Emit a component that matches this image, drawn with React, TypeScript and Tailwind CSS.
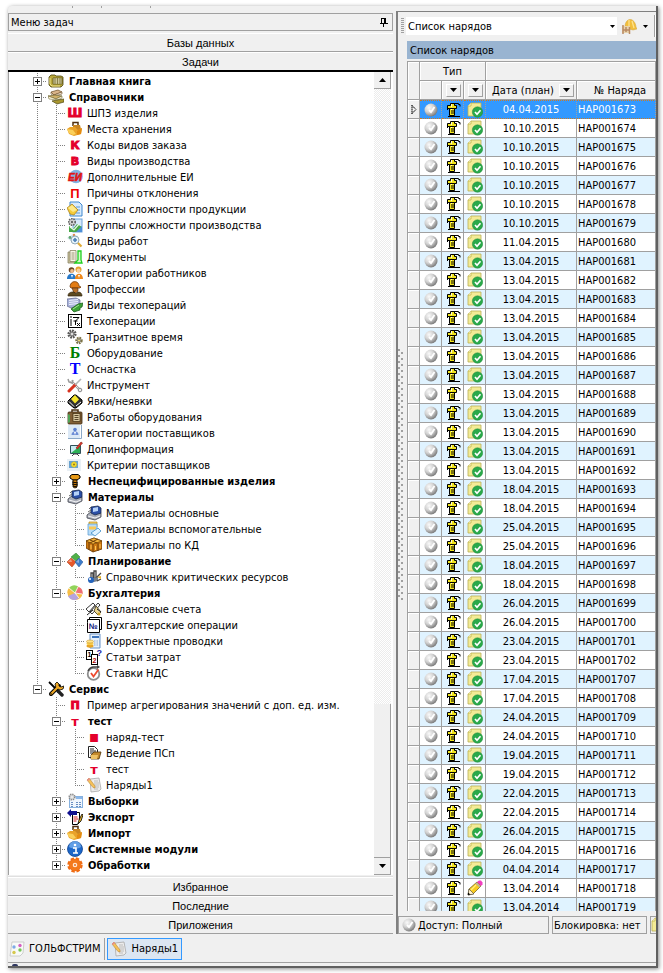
import { Fragment, useState, type ReactNode } from "react";

const glyphs: Record<string, ReactNode> = {
  ledger: (
    <>
      <path d="M1 4l2-2h4l1 1h5l2 1v8l-2 2H3l-2-2z" fill="#b9a83c" stroke="#4a430c" strokeWidth="0.8" />
      <path d="M5 5h9v6H5z" fill="#fffad2" stroke="#4a430c" strokeWidth="0.7" />
      <path d="M5 7h9M5 9h9M7 5v6M9.500 5v6M12 5v6" stroke="#5b5212" strokeWidth="0.6" />
      <path d="M2 5v6l2 2h8" fill="none" stroke="#f0e48c" />
    </>
  ),
  books: (
    <>
      <path d="M3 3l7-2 4 2-8 3z" fill="#d9b48a" stroke="#6b4b23" strokeWidth="0.7" />
      <path d="M3 3v2l3 2 8-2V3L6 6z" fill="#f6ead8" stroke="#6b4b23" strokeWidth="0.6" />
      <path d="M0 7l7-1 7 1-6 3z" fill="#cfb06a" stroke="#5e5620" strokeWidth="0.6" />
      <path d="M0 7l1 3 8 1 5-2V7l-6 3z" fill="#fff8dc" stroke="#5e5620" strokeWidth="0.5" />
      <path d="M4 12l5-1 7-1v3l-7 2z" fill="#a8962f" stroke="#4e4718" strokeWidth="0.7" />
    </>
  ),
  bagBrown: (
    <>
      <path d="M6 5V1.500h5V5" fill="none" stroke="#503010" strokeWidth="1.5" />
      <path d="M6 4h7l1 4-3 3-5-2z" fill="#c98522" />
      <path d="M0 8l3-2h5l3 3 4-2-1 6-7 2-5-2z" fill="#e9a229" />
      <path d="M0 8l6 1 3 4-3 1-4-2z" fill="#fbd05a" />
      <path d="M10 10l5-3-1 6-4 1z" fill="#e48b10" />
    </>
  ),
  unit: (
    <>
      <circle cx="9" cy="7.500" r="6.800" fill="#7fb4e4" />
      <text x="1" y="12" fontSize="10" fontWeight="700" fontStyle="italic" fill="#e11515" stroke="#e11515" strokeWidth="0.6" fontFamily="Liberation Sans">ЕИ</text>
    </>
  ),
  goldDoc: (
    <>
      <path d="M3 1h9l3 3v11H3z" fill="#d8eafc" stroke="#3f88cf" />
      <path d="M9 6h4M9 9h4M9 12h4" stroke="#5a9ad6" />
      <path d="M0 7l5-4 6 6-4 5-4-1z" fill="#f4cb3a" stroke="#a57a12" strokeWidth="0.7" />
      <path d="M1 7l4-3 5 5-4 2z" fill="#fde98d" />
    </>
  ),
  gearChart: (
    <>
      <rect x="6" y="2" width="9" height="13" fill="#d6e8fa" stroke="#6ea3da" />
      <path d="M2 15V9l4 3 4-5 5 3v5z" fill="#46a845" />
      <path d="M3 10l4 3 5-6" fill="none" stroke="#e7f6e5" strokeWidth="1.2" />
      <path d="M9 15l6-6v6z" fill="#4e8fd8" />
      <circle cx="5" cy="5" r="3.200" fill="#ddd" stroke="#666" strokeWidth="1.7" strokeDasharray="1.5 .8" />
      <circle cx="5" cy="5" r="1.200" fill="#666" />
    </>
  ),
  magnify: (
    <>
      <path d="M0 5l6-4 5 2-6 6z" fill="#d5e6ee" />
      <circle cx="3" cy="4.500" r="1.400" fill="#62a66c" />
      <circle cx="7" cy="2" r="1.200" fill="#dd8a52" />
      <circle cx="8" cy="7" r="4" fill="#e4f2fb" stroke="#94abb8" />
      <path d="M6 7h4M8 5v4" stroke="#4b7fb5" strokeWidth="1.6" />
      <path d="M11 10l3.500 3.500" stroke="#e0ab38" strokeWidth="2.2" />
    </>
  ),
  docGreen: (
    <>
      <path d="M1 3h7v11H1z" fill="#c9c29c" stroke="#8a8465" strokeWidth="0.8" />
      <path d="M3 1.500h6v11H3z" fill="#f9f6e6" stroke="#8a8465" strokeWidth="0.8" />
      <path d="M4.500 4h3M4.500 6h3M4.500 8h3M4.500 10h3" stroke="#9c9676" />
      <path d="M11 2h3v9l1 3H8l3-3z" fill="#d6f9ca" stroke="#1fcf1f" strokeWidth="1.3" />
    </>
  ),
  people: (
    <>
      <circle cx="4.500" cy="5" r="2.800" fill="#6c4524" />
      <circle cx="5" cy="6" r="1.900" fill="#f0bd8c" />
      <path d="M0 14c0-7 9-7 9 0z" fill="#2878c8" />
      <circle cx="11.500" cy="4.500" r="3" fill="#e5a12f" />
      <circle cx="11.500" cy="5.500" r="1.900" fill="#f9cfa0" />
      <path d="M8 14c0-7 8-7 8 0z" fill="#ef8a1d" />
      <path d="M4 10l1 3 1-3M11 10l1 3 1-3" fill="#fff" />
    </>
  ),
  worker: (
    <>
      <path d="M3 6c0-7 9-7 9-1l2 1-1 1H4z" fill="#e27b12" stroke="#5e2f08" strokeWidth="0.7" />
      <path d="M5 7h6v3l-2 2H7z" fill="#b8712b" stroke="#4b270b" strokeWidth="0.6" />
      <path d="M1 15c0-4 4-4 6-4l2 2 2-2c3 0 4 2 4 4z" fill="#5d4a20" stroke="#30240c" strokeWidth="0.7" />
    </>
  ),
  techKind: (
    <>
      <path d="M0 2l9-1 4 2v6l-9 2-4-2z" fill="#a8b2d8" stroke="#5b6288" strokeWidth="0.7" />
      <path d="M2 3.500l9-1M2 5.500l9-1M2 7.500l9-1" stroke="#eef1ff" />
      <path d="M4 12l7-5 5-1-1 4-2 1v2l-6 2z" fill="#3ba136" stroke="#145813" strokeWidth="0.7" />
      <path d="M6 12l6-4" stroke="#a2e48f" />
    </>
  ),
  techOp: (
    <>
      <rect x="1.500" y="1.500" width="13" height="13" fill="#fff" stroke="#000" />
      <path d="M4 3v2M4 6v5M6 4.500h6L8.500 8M6.500 8h4M8.500 8v4M10 10l3 3M13 10l-3 3" stroke="#000" fill="none" />
      <path d="M3 12h2" stroke="#000" />
    </>
  ),
  gears: (
    <>
      <circle cx="5" cy="5" r="3" fill="none" stroke="#5a5a5a" strokeWidth="3.200" strokeDasharray="1.600 .7" />
      <circle cx="5" cy="5" r="2" fill="#ddd" stroke="#666" />
      <circle cx="12" cy="11.500" r="2.400" fill="none" stroke="#7c7243" strokeWidth="2.600" strokeDasharray="1.400 .7" />
      <circle cx="12" cy="11.500" r="1.600" fill="#eed96d" stroke="#777" />
    </>
  ),
  tools: (
    <>
      <path d="M4 4l8 8" stroke="#999" strokeWidth="2.400" />
      <path d="M4 4l8 8" stroke="#e4e4e4" />
      <path d="M1 2l1 3 3 1 1-3" fill="none" stroke="#999" strokeWidth="1.5" />
      <path d="M2 14l6-6" stroke="#d8321f" strokeWidth="3" strokeLinecap="round" />
      <path d="M8 8l6-6" stroke="#b3b3b3" strokeWidth="1.600" />
      <circle cx="13" cy="13" r="1.800" fill="#eee" stroke="#888" />
    </>
  ),
  diamond: (
    <>
      <path d="M1 8l6-6h2l6 5v3l-6 5H7L1 10z" fill="#303030" stroke="#000" />
      <path d="M4 6l4-4 4 4.500-4 4z" fill="#f7e72b" />
      <path d="M2 8.500l5 5M9 13l5-4" stroke="#fff" />
    </>
  ),
  briefcase: (
    <>
      <path d="M5 4V1h6v3" fill="none" stroke="#4c3216" strokeWidth="1.500" />
      <rect x="1" y="3" width="14" height="12" rx="1" fill="#805e35" stroke="#3d280f" strokeWidth="0.8" />
      <rect x="6" y="4.500" width="7" height="8" fill="#d8c79f" stroke="#3d280f" strokeWidth="0.700" />
      <path d="M7.500 6.500h4M7.500 8.500h4M7.500 10.500h4" stroke="#57452a" />
      <path d="M1 5l2 1v7l-2 1z" fill="#4fa354" />
    </>
  ),
  supplier: (
    <>
      <path d="M1 0h12v13H1z" fill="#dce9f6" />
      <path d="M14.500 0v13.500H1" stroke="#8ca9c8" fill="none" />
      <circle cx="8" cy="4.500" r="1.800" fill="#5b7ed0" />
      <path d="M4.500 10c0-5 7-5 7 0z" fill="#6f8fd6" />
      <path d="M7 7l1 3 1-3" fill="#fff" />
    </>
  ),
  info: (
    <>
      <path d="M3.500 4.500h10v8h-10z" fill="#c8ecf2" stroke="#30505a" />
      <path d="M4 12l9-7v7z" fill="#2eb157" />
      <path d="M9 7l5-6 1.500 1-5 6z" fill="#e33b2c" stroke="#7c150e" strokeWidth="0.600" />
      <path d="M5 15l2-2h3l2 2" fill="none" stroke="#444" />
    </>
  ),
  criteria: (
    <>
      <path d="M0 2h14v12H0z" fill="#e9f0f5" />
      <rect x="2" y="4" width="9" height="7" fill="#6ba3cf" />
      <circle cx="7" cy="7.500" r="2.700" fill="#f6dd2c" stroke="#d2b21c" strokeDasharray="1 1" />
      <circle cx="7" cy="7.500" r=".9" fill="#8a721b" />
    </>
  ),
  bolt: (
    <>
      <path d="M3 3l2-1.500h6L13 3v2l-3 2H6L3 5z" fill="#e79a18" stroke="#000" />
      <path d="M6 7h4v7l-2 1-2-1z" fill="#d4820c" stroke="#000" strokeWidth="0.8" />
      <path d="M5 9l6 1M5 11l6 1M6 13l4 1" stroke="#000" />
    </>
  ),
  press: (
    <>
      <path d="M1 10l5-4 9 2v4l-6 3-8-2z" fill="#a9adb8" stroke="#3f434d" strokeWidth="0.800" />
      <path d="M5 2l7-1 3 2v5l-6 2-4-2z" fill="#2b4fa6" stroke="#19294e" strokeWidth="0.800" />
      <path d="M7 3l5-1v4L7 7z" fill="#b6d2f8" />
      <path d="M2 11l7 2 5-2" fill="none" stroke="#f5f5f5" />
      <path d="M3 4l2-2M2 7l3-2" stroke="#666" />
    </>
  ),
  vial: (
    <>
      <path d="M3 1h8v5H3z" fill="#ffd45a" stroke="#b58517" strokeWidth="0.700" />
      <path d="M2 3h9v9l-3 2H2z" fill="#b8dcf8" stroke="#559ad0" strokeWidth="0.700" />
      <path d="M3 7h7" stroke="#f9c956" strokeWidth="3" />
      <path d="M5 12l7-5 3 3-6 5z" fill="#dff2ff" stroke="#3e8dc7" strokeWidth="0.800" />
    </>
  ),
  crate: (
    <>
      <path d="M0 4l8-3 8 3v8l-9 3-7-4z" fill="#cf7a12" stroke="#5e3404" strokeWidth="0.800" />
      <path d="M0 4l7 3 9-3-8-3z" fill="#f5b63c" stroke="#5e3404" strokeWidth="0.600" />
      <path d="M7 7v8M3 5v8M12 6v8M4 3l7 3M12 2L4 6" stroke="#6e3d07" />
      <path d="M5 8v4M9.500 9v4M14 7v4" stroke="#ffc757" />
    </>
  ),
  cubes: (
    <>
      <path d="M4 4l5-4 4 4-4 4z" fill="#50b149" stroke="#277a28" strokeWidth="0.500" />
      <path d="M0 9l4-4 5 4-4 5z" fill="#e8592b" stroke="#a63412" strokeWidth="0.500" />
      <path d="M8 9l4-4 4 4-4 5z" fill="#3d7dcb" stroke="#214f93" strokeWidth="0.500" />
      <path d="M1 9l3-3 1 3zM9 9l3-3v4z" fill="#fff" opacity=".4" />
    </>
  ),
  resource: (
    <>
      <path d="M2 10l10-2v4l-8 2z" fill="#77808a" />
      <path d="M5 9V4h2v5M8 9V2h2v7M11 8l4-4M11 12l4-2" fill="none" stroke="#444" strokeWidth="1.300" />
      <circle cx="5" cy="11" r="3" fill="#2464bd" />
      <circle cx="4" cy="10" r="1" fill="#fff" />
      <path d="M11 8l4-1v3z" fill="#e8b52f" />
    </>
  ),
  pie: (
    <>
      <ellipse cx="8" cy="8" rx="7.500" ry="7" fill="#f7be45" />
      <path d="M8 8L2 3c3-4 8-3 9-1z" fill="#91d45b" />
      <path d="M8 8l3-6c4 1 5 4 4.500 7z" fill="#ee6d76" />
      <path d="M8 8L1 11c2 5 8 5 11 2z" fill="#b6a4de" />
      <path d="M8 8L.5 8c-.5-3 1-4 1.500-5z" fill="#f7be45" />
      <path d="M8 8L2 3M8 8l3-6M8 8l7 1M8 8l4 5" stroke="#fff" strokeWidth="0.800" />
    </>
  ),
  handshake: (
    <>
      <path d="M0 8l7-6 2 2-6 7zM4 11l8-9 2 2-8 9z" fill="#fff" stroke="#222" strokeWidth="0.9" />
      <path d="M10 5l5 6-3 3-4-4z" fill="#ead694" stroke="#332b0d" strokeWidth="0.800" />
      <path d="M1 14l6-5M11 8l4 3" stroke="#222" />
      <circle cx="13" cy="13" r="1.500" fill="#c69b22" />
    </>
  ),
  number: (
    <>
      <path d="M3.500 3.500v-3h12v12h-3" fill="#fff" stroke="#000" />
      <path d="M1.500 5.500v-3h12v13h-12z" fill="#fff" stroke="#000" />
      <text x="2.500" y="12" fontSize="8" fontWeight="700" fill="#102080" fontFamily="Liberation Sans">№</text>
    </>
  ),
  calcDoc: (
    <>
      <path d="M4 1h10v14H4z" fill="#e6f0fb" stroke="#6a94c9" />
      <path d="M6 3h7v2H6z" fill="#3d75bf" />
      <path d="M8 8h6M8 10h6M8 12h6" stroke="#88a9d2" strokeDasharray="1.500 1" />
      <ellipse cx="4" cy="13" rx="3.500" ry="1.700" fill="#e7a424" />
      <ellipse cx="4" cy="10.500" rx="3.500" ry="1.700" fill="#f8cc4c" />
      <ellipse cx="4" cy="8.500" rx="3.500" ry="1.500" fill="#ffe48a" stroke="#c18a1b" strokeWidth="0.500" />
    </>
  ),
  costs: (
    <>
      <rect x=".5" y="1.500" width="6" height="9" fill="#fff" stroke="#000" />
      <rect x="5.500" y="5.500" width="6" height="10" fill="#fff" stroke="#000" />
      <text x="1.500" y="8" fontSize="7" fontWeight="700" fontFamily="Liberation Sans">1</text>
      <text x="6.500" y="13.500" fontSize="7" fontWeight="700" fill="#b00000" fontFamily="Liberation Sans">2</text>
      <text x="10.500" y="7" fontSize="9" fontWeight="700" fill="#1c1ca8" fontFamily="Liberation Sans">?</text>
    </>
  ),
  rate: (
    <>
      <circle cx="7.500" cy="9" r="5.800" fill="#fff" stroke="#8e8e8e" strokeWidth="1.800" />
      <path d="M2 6a7 7 0 0 1 5-4l5 0" fill="none" stroke="#444" strokeWidth="1.400" />
      <path d="M11 0l3 2-3 2z" fill="#444" />
      <path d="M5 8l2.500 3.500 5-7" fill="none" stroke="#ee4a2f" strokeWidth="1.800" />
    </>
  ),
  service: (
    <>
      <path d="M1 1l10 10" stroke="#000" strokeWidth="1.800" />
      <path d="M10 10l4 4" stroke="#222" strokeWidth="3.400" strokeLinecap="round" />
      <path d="M3 13l8-8" stroke="#000" strokeWidth="4" strokeLinecap="round" />
      <path d="M9 1l2 2 0 2 2 1 3-1-1 3-3 1-4-2-1-4z" fill="#eda826" stroke="#000" strokeWidth="0.800" />
      <path d="M3 13l7-7" stroke="#eda826" strokeWidth="2.200" strokeLinecap="round" />
      <circle cx="3" cy="13" r=".8" fill="#000" />
    </>
  ),
  docBox: (
    <>
      <path d="M2.500 1.500h6l3 3v8h-9z" fill="#fff" stroke="#222" />
      <path d="M4 4h4M4 6h6M4 8h4" stroke="#222" />
      <path d="M5 10l3-3h7l-2 7H5z" fill="#c48a2c" stroke="#4f3307" strokeWidth="0.800" />
      <path d="M5 10h7l-1 4H5z" fill="#eec265" />
    </>
  ),
  note: (
    <>
      <path d="M4 2l9-1 2 11-2 2-8 1z" fill="#ececec" stroke="#a8a8a8" strokeWidth="0.800" />
      <path d="M8 4h4M8 6h5M7 8h6M8 10h5M8 12h4" stroke="#bcbcbc" />
      <path d="M1 3l2-2 6 8v2l-2-.5z" fill="#f6c25a" stroke="#b98a3c" strokeWidth="0.600" />
      <path d="M1 3l2-2 1 1-2 2z" fill="#e98792" />
    </>
  ),
  selection: (
    <>
      <rect x="2.500" y="3.500" width="13" height="11" fill="#f0f6fd" stroke="#87b1df" />
      <path d="M9 4h6v2H9z" fill="#8bb8ea" />
      <path d="M4 9.500h3M9 9.500h5M4 11.500h3M9 11.500h5M4 13.500h3M9 13.500h5" stroke="#4674b2" strokeDasharray="2 1" strokeWidth="0.8" />
      <circle cx="5" cy="4" r="2.700" fill="#e9e9e9" stroke="#8a8a8a" strokeWidth="1.800" strokeDasharray="1.300 .8" />
    </>
  ),
  exportIcon: (
    <>
      <path d="M5.500 3.500h7v9l-2 3h-5z" fill="#fff" stroke="#000" />
      <path d="M6.500 8h4M6.500 10h5M6.500 12h3" stroke="#d1212b" />
      <path d="M0 4l4-4v2h6v4H4v2z" fill="#10108f" />
      <path d="M15 5l-3 6-1 4 3-3 2-6z" fill="#e8b326" stroke="#000" strokeWidth="0.800" />
    </>
  ),
  system: (
    <>
      <circle cx="8" cy="8" r="7.500" fill="#1c66c8" stroke="#0f4490" strokeWidth="0.800" />
      <path d="M2 6a6 6 0 0 1 12 0c-3 2-8 2-12 0z" fill="#78b2f0" opacity=".75" />
      <circle cx="8" cy="4" r="1.300" fill="#fff" />
      <path d="M6 7h3v5h1M6 12h5" fill="none" stroke="#fff" strokeWidth="1.600" />
    </>
  ),
  process: (
    <>
      <circle cx="8" cy="8" r="6.200" fill="#ef6b13" stroke="#ef6b13" strokeWidth="3" strokeDasharray="3.200 1.670" />
      <circle cx="8" cy="8" r="5.800" fill="#f47a1c" />
      <circle cx="8" cy="8" r="2.300" fill="#ffe9d3" />
      <circle cx="8" cy="8" r="1" fill="#ef6b13" />
    </>
  ),
  home: (
    <>
      <path d="M3 1h12l-1 11-3 3H1z" fill="#f8faf8" stroke="#c2c4c2" strokeWidth="0.800" />
      <circle cx="5" cy="6" r="1.700" fill="#7eaae6" />
      <circle cx="11" cy="4.500" r="1.700" fill="#d65fc2" />
      <circle cx="11" cy="9" r="1.700" fill="#76c657" />
      <circle cx="5" cy="11.500" r="1.700" fill="#d6c84d" />
    </>
  ),
  sphere: (
    <>
      <defs>
        <radialGradient id="ball" cx="35%" cy="32%" r="70%">
          <stop offset="0" stopColor="#fafafa" />
          <stop offset=".5" stopColor="#d2d2d2" />
          <stop offset="1" stopColor="#7c7c7c" />
        </radialGradient>
      </defs>
      <circle cx="8" cy="8" r="6.500" fill="url(#ball)" />
      <path d="M6 8l2 2 3.500-5" fill="none" stroke="#fff" strokeWidth="1.800" />
    </>
  ),
  robot: (
    <>
      <path d="M5.500 1.500h4v2h2v3h-9v-3h3z" fill="#f2e51e" stroke="#000" />
      <path d="M4.500 6.500h5v7h-5z" fill="#f2e51e" stroke="#000" />
      <path d="M6 9h4M6 11h4M3 14.500h12" stroke="#000" />
      <path d="M9 1.500h4.500v1h1.500v2M2.500 4v4" fill="none" stroke="#000" />
      <path d="M6.500 2v3M6 7.500h1" stroke="#fffbd0" />
    </>
  ),
  approved: (
    <>
      <path d="M4 1h10v12l-1 1H1V4z" fill="#f3eb96" stroke="#b9ae55" strokeWidth="0.8" />
      <path d="M1 4h3V1" fill="#fffbd8" stroke="#c2b64c" strokeWidth="0.8" />
      <circle cx="10.500" cy="10" r="5.200" fill="#2aa94a" stroke="#1d8a39" strokeWidth="0.500" />
      <path d="M8 10l2 2.200 3.500-4" fill="none" stroke="#fff" strokeWidth="1.700" />
    </>
  ),
  pencil: (
    <>
      <path d="M1 15l1-6 8-7 4 4-8 8z" fill="#f8cc21" stroke="#4b3b05" strokeWidth="0.600" />
      <path d="M1 15l1-6 5 5z" fill="#fff1d1" stroke="#222" strokeWidth="0.500" />
      <path d="M1 15v-2.500l2.500 2z" fill="#000" />
      <path d="M10 2l2-1.500h2l1.500 2v2L14 6z" fill="#f23fc2" />
      <path d="M9 3l4 4" stroke="#b0b0b0" strokeWidth="1.500" />
      <path d="M4 10l5-5" stroke="#fff07d" strokeWidth="1.2" />
    </>
  ),
  helmet: (
    <>
      <path d="M4 9c0-10 10-10 11 0l1 2-4 1-8-2z" fill="#f1be3c" stroke="#d1a23a" strokeWidth="0.500" />
      <path d="M8 2v6M11 3l2 7" stroke="#fde18b" strokeWidth="1.300" />
      <path d="M1 8h8v7H1z" fill="#e8d3ac" />
      <path d="M2 7v9M5 9v5M8.500 9v7M2 12h6" stroke="#b98a63" strokeWidth="1.500" />
    </>
  ),
};

function Icon({ name }: { name: string }) {
  return (
    <svg viewBox="0 0 16 16" className="size-4 shrink-0" fill="#000" aria-hidden="true">
      {glyphs[name]}
    </svg>
  );
}

const letters: Record<string, [string, string]> = {
  sh: ["Ш", "text-[#e4002b] text-xs font-['DejaVu_Sans'] [-webkit-text-stroke:1px_#e4002b]"],
  k: ["К", "text-[#e4002b] text-[11px] font-['DejaVu_Sans'] [-webkit-text-stroke:1px_#e4002b]"],
  v: ["В", "text-[#e4002b] text-[11px] font-['DejaVu_Sans'] [-webkit-text-stroke:1px_#e4002b]"],
  p: ["П", "text-[#ee0000] text-[13px] font-['Liberation_Sans']"],
  p2: ["П", "text-[#e4002b] text-[11px] font-['DejaVu_Sans'] [-webkit-text-stroke:1px_#e4002b]"],
  b: ["Б", "text-[#008000] text-base font-['Liberation_Serif']"],
  t: ["Т", "text-[#0000ff] text-base font-['Liberation_Serif']"],
  tr: ["т", "text-[#e4002b] text-[13px] font-['DejaVu_Sans']"],
  n: ["н", "text-[#e4002b] text-[11px] font-['DejaVu_Sans'] [-webkit-text-stroke:2px_#e4002b]"],
};

function RowIcon({ name }: { name: string }) {
  const letter = letters[name];
  if (!letter) return <Icon name={name} />;
  return (
    <span aria-hidden="true" className={`flex size-4 shrink-0 items-center justify-center font-bold leading-none ${letter[1]}`}>
      {letter[0]}
    </span>
  );
}

type Node = { label: string; icon: string; open?: boolean; children?: Node[]; group?: boolean };
const leaf = (label: string, icon: string): Node => ({ label, icon });
const folder = (label: string, icon: string, children: Node[] = []): Node => ({
  label, icon, children, group: true, open: children.length > 0,
});

const tree: Node[] = [
  folder("Главная книга", "ledger"),
  folder("Справочники", "books", [
    leaf("ШПЗ изделия", "sh"),
    leaf("Места хранения", "bagBrown"),
    leaf("Коды видов заказа", "k"),
    leaf("Виды производства", "v"),
    leaf("Дополнительные ЕИ", "unit"),
    leaf("Причины отклонения", "p"),
    leaf("Группы сложности продукции", "goldDoc"),
    leaf("Группы сложности производства", "gearChart"),
    leaf("Виды работ", "magnify"),
    leaf("Документы", "docGreen"),
    leaf("Категории работников", "people"),
    leaf("Профессии", "worker"),
    leaf("Виды техопераций", "techKind"),
    leaf("Техоперации", "techOp"),
    leaf("Транзитное время", "gears"),
    leaf("Оборудование", "b"),
    leaf("Оснастка", "t"),
    leaf("Инструмент", "tools"),
    leaf("Явки/неявки", "diamond"),
    leaf("Работы оборудования", "briefcase"),
    leaf("Категории поставщиков", "supplier"),
    leaf("Допинформация", "info"),
    leaf("Критерии поставщиков", "criteria"),
    folder("Неспецифицированные изделия", "bolt"),
    folder("Материалы", "press", [
      leaf("Материалы основные", "press"),
      leaf("Материалы вспомогательные", "vial"),
      leaf("Материалы по КД", "crate"),
    ]),
    folder("Планирование", "cubes", [leaf("Справочник критических ресурсов", "resource")]),
    folder("Бухгалтерия", "pie", [
      leaf("Балансовые счета", "handshake"),
      leaf("Бухгалтерские операции", "number"),
      leaf("Корректные проводки", "calcDoc"),
      leaf("Статьи затрат", "costs"),
      leaf("Ставки НДС", "rate"),
    ]),
  ]),
  folder("Сервис", "service", [
    leaf("Пример агрегирования значений с доп. ед. изм.", "p2"),
    folder("тест", "tr", [
      leaf("наряд-тест", "n"),
      leaf("Ведение ПСп", "docBox"),
      leaf("тест", "tr"),
      leaf("Наряды1", "note"),
    ]),
    folder("Выборки", "selection"),
    folder("Экспорт", "exportIcon"),
    folder("Импорт", "bagBrown"),
    folder("Системные модули", "system"),
    folder("Обработки", "process"),
  ]),
];

function Guide({ up = true, down = true, branch = false }: { up?: boolean; down?: boolean; branch?: boolean }) {
  return (
    <svg viewBox="0 0 19 16" className="col-start-1 row-start-1 h-4 w-[19px] shrink-0" fill="none" stroke="#808080" strokeDasharray="1 1" aria-hidden="true">
      {up && <path d="M9.5 0v8" />}
      {down && <path d="M9.5 8v8" />}
      {branch && <path d="M9 8.5h10" />}
    </svg>
  );
}

function TreeRows({ nodes, trail }: { nodes: Node[]; trail: boolean[] }) {
  return (
    <>
      {nodes.map((node, i) => (
        <TreeRow key={i} node={node} trail={trail} last={i === nodes.length - 1} />
      ))}
    </>
  );
}

function TreeRow({ node, trail, last }: { node: Node; trail: boolean[]; last: boolean }) {
  const [open, setOpen] = useState(!!node.open);
  return (
    <Fragment>
      <li className="flex h-4 items-center whitespace-nowrap">
        {trail.map((line, i) => (
          <Guide key={i} up={line} down={line} />
        ))}
        <span className="grid shrink-0">
          <Guide down={!last} branch />
          {node.group && (
            <button
              type="button"
              aria-label={open ? "Свернуть" : "Развернуть"}
              onClick={() => setOpen(!open)}
              className="col-start-1 row-start-1 ml-[5px] mt-1 size-[9px] bg-white"
            >
              <svg viewBox="0 0 9 9" className="size-[9px]" fill="none" shapeRendering="crispEdges">
                <rect x=".5" y=".5" width="8" height="8" stroke="#808080" />
                <path d={open ? "M2 4.5h5" : "M2 4.5h5M4.5 2v5"} stroke="#000" />
              </svg>
            </button>
          )}
        </span>
        <span className="ml-px flex items-center gap-1">
          <RowIcon name={node.icon} />
          <span className={node.group ? "pl-px font-bold" : ""}>{node.label}</span>
        </span>
      </li>
      {open && node.children && <TreeRows nodes={node.children} trail={[...trail, !last]} />}
    </Fragment>
  );
}

const runs: [number, number, string][] = [
  [1673, 1673, "04.04.2015"],
  [1674, 1679, "10.10.2015"],
  [1680, 1680, "11.04.2015"],
  [1681, 1692, "13.04.2015"],
  [1693, 1694, "18.04.2015"],
  [1695, 1696, "25.04.2015"],
  [1697, 1698, "18.04.2015"],
  [1699, 1700, "26.04.2015"],
  [1701, 1702, "23.04.2015"],
  [1707, 1708, "17.04.2015"],
  [1709, 1710, "24.04.2015"],
  [1711, 1712, "19.04.2015"],
  [1713, 1714, "22.04.2015"],
  [1715, 1716, "26.04.2015"],
  [1717, 1717, "04.04.2014"],
  [1718, 1719, "13.04.2014"],
];
const orders = runs.flatMap(([from, to, date]) =>
  Array.from({ length: to - from + 1 }, (_, i) => ({ id: from + i, date })),
);

function Triangle({ up = false }: { up?: boolean }) {
  return (
    <svg viewBox="0 0 7 4" className="h-1 w-[7px] shrink-0" fill="#000" aria-hidden="true">
      <path d={up ? "M0 4L3.5 0 7 4z" : "M0 0h7L3.5 4z"} />
    </svg>
  );
}

function FilterButton() {
  return (
    <button type="button" aria-label="Фильтр" className="flex h-[13px] w-[15px] shrink-0 items-center justify-center border border-l-white border-t-white border-r-[#a0a0a0] border-b-[#a0a0a0] bg-[#f0f0f0]">
      <Triangle />
    </button>
  );
}

function SideButton({ children, active = false }: { children: string; active?: boolean }) {
  return (
    <button
      type="button"
      className={`w-full shrink-0 border-t border-t-white bg-[#f0f0f0] pt-0.5 text-center font-['Liberation_Sans',sans-serif] text-[11px] leading-[15px] ${active ? "h-5 border-b-2 border-b-black" : "h-[19px] border-b border-b-[#a0a0a0]"}`}
    >
      {children}
    </button>
  );
}

function TaskPanel() {
  return (
    <section className="flex min-h-0 w-[385px] shrink-0 flex-col">
      <div className="flex h-[7px] shrink-0 pl-16">
        <span className="ml-0 h-0.5 w-px bg-[#a0a0a0]" />
        <span className="ml-7 h-0.5 w-px bg-[#a0a0a0]" />
        <span className="ml-12 h-0.5 w-px bg-[#a0a0a0]" />
      </div>
      <header className="mb-0.5 flex h-[18px] shrink-0 items-center justify-between border border-[#a0a0a0] pl-0.5 pr-1">
        <h1 className="text-[11px]">Меню задач</h1>
        <button type="button" aria-label="Закрепить">
          <svg viewBox="0 0 8 10" className="h-2.5 w-2" fill="none" stroke="#000" shapeRendering="crispEdges">
            <path d="M1.500 1v5M1 1.500h5M5.500 1v5M4.500 1v5M0 6.500h8M3.500 7v3" />
          </svg>
        </button>
      </header>
      <SideButton>Базы данных</SideButton>
      <SideButton active>Задачи</SideButton>
      <div className="flex min-h-0 flex-1 overflow-hidden border-l border-r border-l-[#a0a0a0] border-r-white bg-white">
        <ul className="min-w-0 flex-1 overflow-hidden pl-[19px] pt-px">
          <TreeRows nodes={tree} trail={[]} />
        </ul>
        <div className="mr-px flex w-[17px] shrink-0 flex-col bg-[repeating-conic-gradient(#ececec_0_25%,#ffffff_0_50%)] bg-[length:2px_2px]">
          <button type="button" aria-label="Вверх" className="flex h-[17px] items-center justify-center border-b border-r border-[#a0a0a0] bg-[#f0f0f0]">
            <Triangle up />
          </button>
          <div className="grow-[614]" />
          <div className="grow-[153] border-b border-r border-[#a0a0a0] bg-[#f0f0f0]" />
          <button type="button" aria-label="Вниз" className="flex h-[17px] items-center justify-center border-b border-r border-[#a0a0a0] bg-[#f0f0f0]">
            <Triangle />
          </button>
        </div>
      </div>
      <div className="h-0.5 shrink-0 border-b border-[#e0e0e0]" />
      <SideButton>Избранное</SideButton>
      <SideButton>Последние</SideButton>
      <SideButton>Приложения</SideButton>
    </section>
  );
}

const headCell = "border-b border-r border-[#a0a0a0] bg-[#f0f0f0] font-normal shadow-[inset_1px_1px_0_#ffffff]";

function OrdersTable() {
  return (
    <table className="w-full table-fixed border-separate border-spacing-0 border-l border-t border-[#a0a0a0]">
      <colgroup>
        <col className="w-3" />
        <col className="w-[22px]" />
        <col className="w-[22px]" />
        <col className="w-[22px]" />
        <col className="w-[91px]" />
        <col />
      </colgroup>
      <thead>
        <tr className="h-[19px]">
          <th rowSpan={2} className={headCell} />
          <th colSpan={3} className={headCell}>Тип</th>
          <th colSpan={2} className={headCell} />
        </tr>
        <tr className="h-[19px]">
          <th className={headCell} />
          <th className={headCell}><div className="flex justify-end pr-0.5"><FilterButton /></div></th>
          <th className={headCell}><div className="flex justify-end pr-0.5"><FilterButton /></div></th>
          <th className={headCell}>
            <div className="flex items-center justify-between pl-1.5 pr-0.5">Дата (план)<FilterButton /></div>
          </th>
          <th className={headCell}><span className="pl-2">№ Наряда</span></th>
        </tr>
      </thead>
      <tbody>
        {orders.map((order, i) => {
          const picked = i === 0;
          const tone = picked ? "bg-[#3399ff] text-white" : i % 2 ? "bg-white" : "bg-[#e0f3ff]";
          const cell = `border-b p-0 ${picked ? "border-b-[#d07a20] border-t border-t-[#d07a20] border-dotted" : "border-b-[#a0a0a0]"} border-r border-r-[#a0a0a0]`;
          return (
            <tr key={order.id} className={`h-[19px] ${tone}`}>
              <td className="border-b border-r border-[#a0a0a0] bg-[#f0f0f0] p-0 shadow-[inset_1px_1px_0_#ffffff]">
                {picked && (
                  <svg viewBox="0 0 6 9" className="mx-auto h-[9px] w-1.5" fill="none" stroke="#000" strokeDasharray="1.500 .5">
                    <path d="M1 0v9M1 0.500l4 4-4 4" />
                  </svg>
                )}
              </td>
              <td className={cell}><div className="flex h-4 justify-center"><Icon name="sphere" /></div></td>
              <td className={cell}><div className="flex h-4 justify-center"><Icon name="robot" /></div></td>
              <td className={cell}><div className="flex h-4 justify-center"><Icon name={order.id === 1718 ? "pencil" : "approved"} /></div></td>
              <td className={`text-center ${cell}`}>{order.date}</td>
              <td className={cell}><span className="pl-px">HAP00{order.id}</span></td>
            </tr>
          );
        })}
      </tbody>
    </table>
  );
}

function Grip() {
  return (
    <svg viewBox="0 0 5 254" className="h-[254px] w-[5px]" fill="#a0a0a0" shapeRendering="crispEdges" aria-hidden="true">
      {Array.from({ length: 42 }, (_, i) => (
        <path key={i} d={`M0 ${i * 6}h2v2h-2zM3 ${i * 6 + 3}h2v2h-2z`} />
      ))}
    </svg>
  );
}

function OrdersPanel() {
  return (
    <section className="mt-[5px] flex min-w-0 flex-1 flex-col border-l-2 border-t border-[#808080]">
      <div className="flex h-7 shrink-0 items-center pl-[3px]">
        <div className="h-4 w-[3px] bg-[repeating-linear-gradient(#a0a0a0_0_1px,#f0f0f0_1px_2px)]" />
        <div className="ml-0.5 grid h-[18px] min-w-0 flex-1 items-center bg-white">
          <select aria-label="Представление" className="col-start-1 row-start-1 h-[18px] w-full appearance-none bg-transparent pl-0.5 text-[11px] outline-none">
            <option>Список нарядов</option>
          </select>
          <span className="pointer-events-none col-start-1 row-start-1 justify-self-end pr-0.5">
            <svg viewBox="0 0 5 3" className="h-[3px] w-[5px]"><path d="M0 0h5L2.500 3z" /></svg>
          </span>
        </div>
        <button type="button" aria-label="Наряд" className="ml-1 flex items-center gap-1.5 pr-1.5">
          <Icon name="helmet" />
          <svg viewBox="0 0 5 3" className="h-[3px] w-[5px]"><path d="M0 0h5L2.500 3z" /></svg>
        </button>
        <div className="h-[22px] w-0.5 border-l border-[#a0a0a0] bg-white" />
      </div>
      <div className="flex min-h-0 flex-1">
        <div className="flex w-[9px] shrink-0 items-center">
          <Grip />
        </div>
        <div className="flex min-w-0 flex-1 flex-col pt-px">
          <h2 className="flex h-[18px] shrink-0 items-center bg-[#99b4d1] pl-[3px]">Список нарядов</h2>
          <div className="mt-0.5 min-h-0 flex-1 overflow-hidden">
            <OrdersTable />
          </div>
        </div>
      </div>
      <footer className="mt-[5px] flex h-[18px] shrink-0 gap-[3px]">
        <div className="flex w-[151px] items-center gap-px border border-[#a0a0a0] pl-0.5"><Icon name="sphere" />Доступ: Полный</div>
        <div className="flex min-w-0 flex-1 items-center whitespace-nowrap border border-[#a0a0a0] pl-px">Блокировка: нет</div>
        <div className="w-1.5 overflow-hidden border border-r-0 border-[#a0a0a0]"><Icon name="approved" /></div>
      </footer>
    </section>
  );
}

export default function App() {
  return (
    <div className="h-screen bg-white pb-[5px] pl-2 pr-[5px] pt-1.5 font-['DejaVu_Sans_Condensed','Noto_Sans',sans-serif] text-[11px] leading-[13px] text-black">
      <main className="flex h-full flex-col overflow-hidden rounded-tl border-b-2 border-r-2 border-[#606060] bg-[#f0f0f0] shadow-[1px_1px_4px_#888888]">
        <div className="flex min-h-0 flex-1">
          <TaskPanel />
          <div className="w-[3px] shrink-0 bg-[#f0f0f0]" />
          <OrdersPanel />
        </div>
        <nav className="flex h-7 shrink-0 items-center pt-px">
          <button type="button" className="flex items-center gap-1 pl-px pr-1"><Icon name="home" />ГОЛЬФСТРИМ</button>
          <div className="h-[22px] w-[3px] border-l border-[#a0a0a0]" />
          <button type="button" className="flex h-[22px] items-center gap-1 border border-[#3399ff] bg-[#dce6f2] px-[3px]"><Icon name="note" />Наряды1</button>
        </nav>
        <div className="flex h-1 shrink-0 border-t border-[#a0a0a0] pl-1"><span className="mt-px h-0.5 w-1.5 rounded-t-full bg-[#303860]" /></div>
      </main>
    </div>
  );
}
